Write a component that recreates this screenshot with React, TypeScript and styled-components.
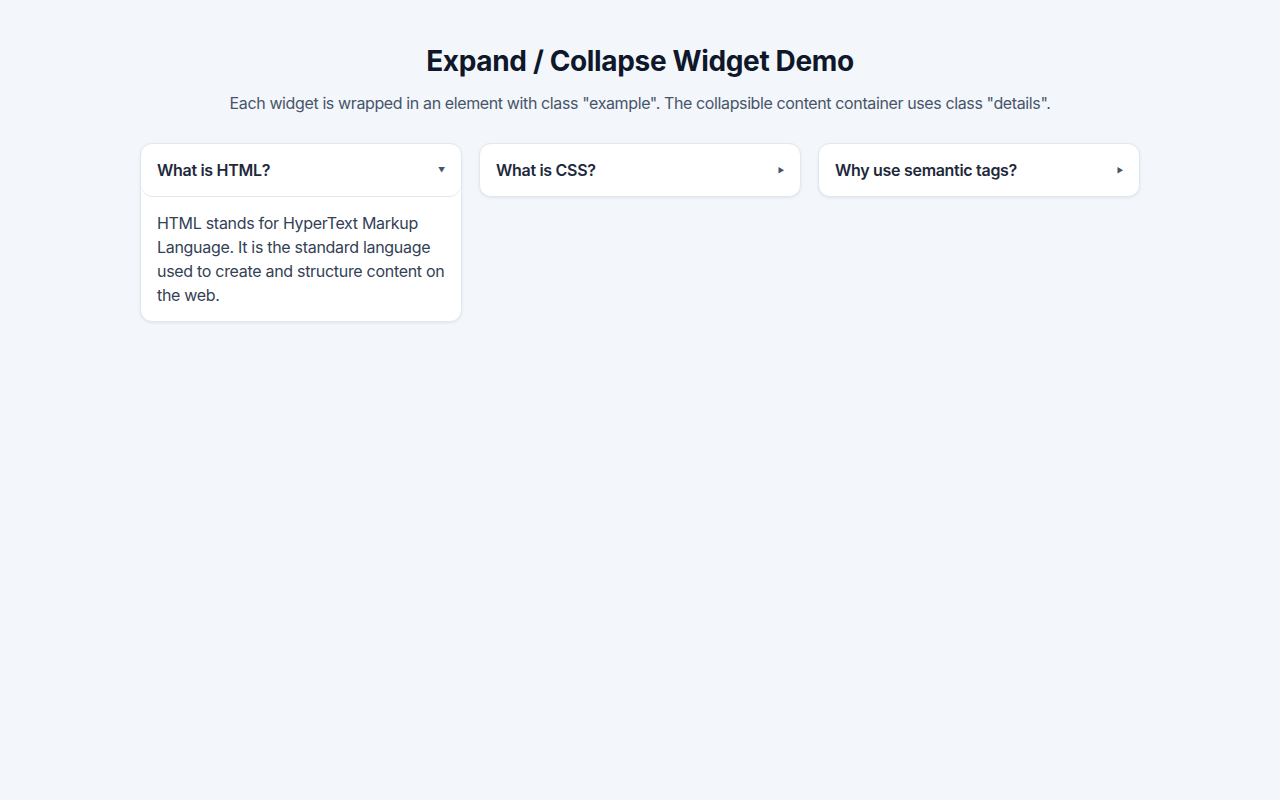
import * as React from 'react'
import styled, { createGlobalStyle } from 'styled-components'

type Item = {
  id: string
  title: string
  body: string
}

const ITEMS: Item[] = [
  {
    id: 'html',
    title: 'What is HTML?',
    body: 'HTML stands for HyperText Markup Language. It is the standard language used to create and structure content on the web.',
  },
  {
    id: 'css',
    title: 'What is CSS?',
    body: 'CSS stands for Cascading Style Sheets. It describes how HTML elements are displayed on screen.',
  },
  {
    id: 'semantic',
    title: 'Why use semantic tags?',
    body: 'Semantic tags give meaning to content, which helps accessibility, search engines and maintainability.',
  },
]

const GlobalStyle = createGlobalStyle`
  * {
    box-sizing: border-box;
  }
  body {
    margin: 0;
    background: #f3f6fb;
    font-family: Inter, "Noto Sans", "Liberation Sans", sans-serif;
    color: #1e293b;
  }
`

const Page = styled.main`
  min-height: 800px;
  padding: 45px 20px 40px;
`

const Header = styled.header`
  text-align: center;
  margin-bottom: 28px;
`

const Title = styled.h1`
  margin: 0 0 12px;
  font-size: 28px;
  line-height: 1.2;
  font-weight: 700;
  letter-spacing: -0.35px;
  color: #0f172a;
`

const Subtitle = styled.p`
  margin: 0;
  font-size: 16px;
  line-height: 24px;
  letter-spacing: -0.38px;
  color: #475569;
`

const Grid = styled.div`
  display: grid;
  grid-template-columns: repeat(3, 1fr);
  gap: 17px;
  align-items: start;
  max-width: 1000px;
  margin: 0 auto;
`

const Card = styled.details`
  background: #fff;
  border: 1px solid #e2e8f0;
  border-radius: 12px;
  box-shadow: 0 1px 3px rgba(15, 23, 42, 0.08);
`

const Summary = styled.summary<{ $open: boolean }>`
  display: flex;
  align-items: center;
  justify-content: space-between;
  list-style: none;
  cursor: pointer;
  padding: 15px 16px;
  font-size: 16px;
  line-height: 22px;
  font-weight: 600;
  letter-spacing: -0.3px;
  color: #1e293b;
  border-radius: 12px;
  box-shadow: ${(p) => (p.$open ? '0 1px 0 #e2e8f0' : 'none')};
  &::-webkit-details-marker {
    display: none;
  }
`

const Marker = styled.span`
  font-size: 7px;
  line-height: 1;
  padding-top: 1px;
  color: #475569;
`

const Content = styled.div`
  padding: 15px 16px 14px;
  font-size: 16px;
  line-height: 24px;
  letter-spacing: -0.3px;
  color: #334155;
`

const Widget: React.FC<{ item: Item; defaultOpen?: boolean }> = (props) => {
  const [open, setOpen] = React.useState(!!props.defaultOpen)
  return (
    <Card
      className="example"
      open={open}
      onToggle={(e) => setOpen((e.currentTarget as HTMLDetailsElement).open)}
    >
      <Summary $open={open}>
        {props.item.title}
        <Marker>{open ? '▼' : '▶'}</Marker>
      </Summary>
      <Content className="details">{props.item.body}</Content>
    </Card>
  )
}

const App: React.FC = () => (
  <>
    <GlobalStyle />
    <Page>
      <Header>
        <Title>Expand / Collapse Widget Demo</Title>
        <Subtitle>
          Each widget is wrapped in an element with class "example". The
          collapsible content container uses class "details".
        </Subtitle>
      </Header>
      <Grid>
        {ITEMS.map((item, index) => (
          <Widget key={item.id} item={item} defaultOpen={index === 0} />
        ))}
      </Grid>
    </Page>
  </>
)

export default App
